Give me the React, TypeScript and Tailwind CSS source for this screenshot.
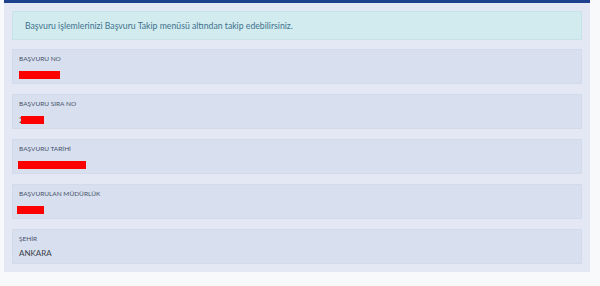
const rows = [
  { label: 'BAŞVURU NO', redact: 'left-0 w-[41px]' },
  { label: 'BAŞVURU SIRA NO', redact: 'left-[2px] w-[23px]', peek: '2' },
  { label: 'BAŞVURU TARİHİ', redact: 'left-[-1px] w-[68px]' },
  { label: 'BAŞVURULAN MÜDÜRLÜK', redact: 'left-[-2px] w-[27px]' },
  { label: 'ŞEHİR', value: 'ANKARA' },
];

function InfoRow({ label, value, redact, peek }: { label: string; value?: string; redact?: string; peek?: string }) {
  return (
    <div className="flex h-[35px] flex-col border border-[#d3dbeb] bg-[#d8dfee] px-[6px] pt-[4px]">
      <span className="text-[6.5px] leading-[9px] text-[#46526b]">{label}</span>
      {value ? (
        <span className="mt-[5px] text-[8px] leading-[10px] text-[#3a3f4a]">{value}</span>
      ) : (
        <div className="relative mt-[8px] h-[8px]">
          {peek && <span className="absolute left-0 top-[-1px] text-[8px] leading-[10px] text-[#3a3f4a]">{peek}</span>}
          <div className={`absolute top-0 h-[8px] bg-[#ff0000] ${redact}`} />
        </div>
      )}
    </div>
  );
}

export default function App() {
  return (
    <div className="h-[286px] w-[600px] bg-[#f8f9fa] font-['Lato',sans-serif]">
      <div className="ml-[4px] w-[586px] border-t-[3px] border-[#1f3f8f] bg-[#e3e8f4] px-[8px] pb-[8px] pt-[8px]">
        <div className="flex h-[29px] items-center border border-[#c5e3e8] bg-[#d1ebef] px-[12px] text-[8.7px] text-[#42728c]">
          Başvuru işlemlerinizi Başvuru Takip menüsü altından takip edebilirsiniz.
        </div>
        <div className="mt-[9px] flex flex-col gap-[10px]">
          {rows.map((r) => (
            <InfoRow key={r.label} {...r} />
          ))}
        </div>
      </div>
    </div>
  );
}
